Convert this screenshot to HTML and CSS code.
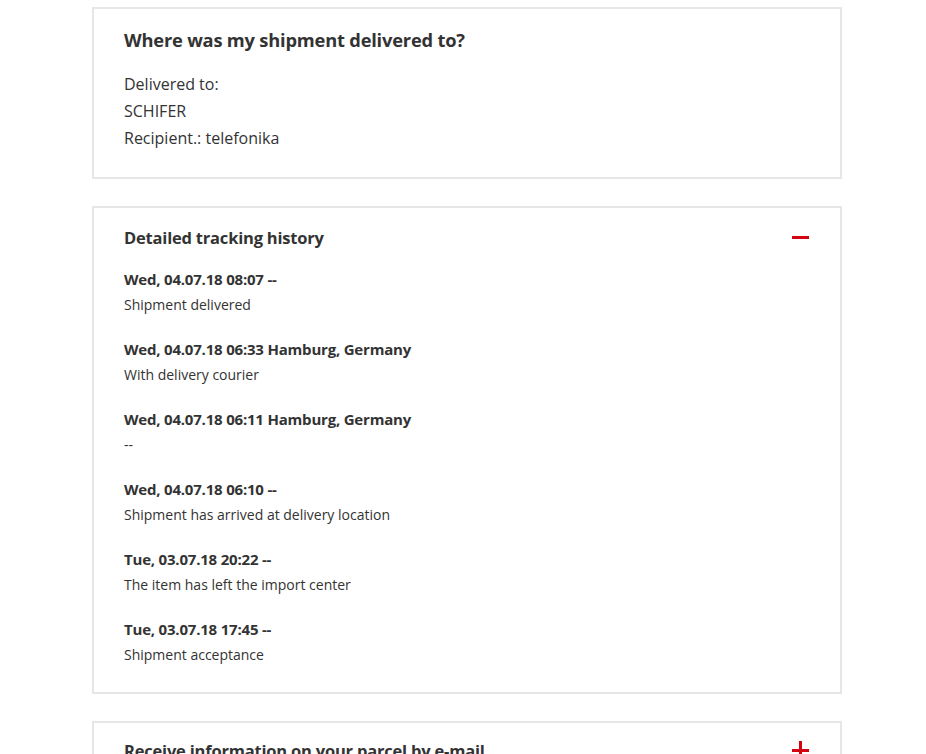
FILE: index.html
```html
<!DOCTYPE html>
<html>
<head>
<meta charset="utf-8">
<link rel="stylesheet" href="styles.css">
</head>
<body>
<main class="page">
  <section class="card card-delivery">
    <h2 class="card-title">Where was my shipment delivered to?</h2>
    <div class="address">
      <div>Delivered to:</div>
      <div>SCHIFER</div>
      <div>Recipient.: telefonika</div>
    </div>
  </section>

  <section class="card card-history">
    <div class="card-head">
      <h3 class="card-subtitle">Detailed tracking history</h3>
      <span class="toggle minus"></span>
    </div>
    <ul class="events">
      <li class="event"><div class="event-date">Wed, 04.07.18 08:07 --</div><div class="event-desc">Shipment delivered</div></li>
      <li class="event"><div class="event-date">Wed, 04.07.18 06:33 Hamburg, Germany</div><div class="event-desc">With delivery courier</div></li>
      <li class="event"><div class="event-date">Wed, 04.07.18 06:11 Hamburg, Germany</div><div class="event-desc">--</div></li>
      <li class="event"><div class="event-date">Wed, 04.07.18 06:10 --</div><div class="event-desc">Shipment has arrived at delivery location</div></li>
      <li class="event"><div class="event-date">Tue, 03.07.18 20:22 --</div><div class="event-desc">The item has left the import center</div></li>
      <li class="event"><div class="event-date">Tue, 03.07.18 17:45 --</div><div class="event-desc">Shipment acceptance</div></li>
    </ul>
  </section>

  <section class="card card-email">
    <div class="card-head">
      <h3 class="card-subtitle">Receive information on your parcel by e-mail</h3>
      <span class="toggle plus"></span>
    </div>
  </section>
</main>
</body>
</html>
```

FILE: styles.css
```css
html, body {
  margin: 0;
  padding: 0;
  background: #fff;
}
body {
  font-family: "Open Sans", "Noto Sans", sans-serif;
  color: #333;
  overflow: hidden;
  height: 754px;
}
.page {
  width: 750px;
  margin-left: 92px;
  padding-top: 7px;
  display: flex;
  flex-direction: column;
  gap: 27px;
}
.card {
  border: 2px solid #e6e6e6;
  padding: 0 31px 0 30px;
}
.card-delivery {
  padding-top: 19px;
  padding-bottom: 25px;
}
.card-title {
  margin: 0;
  font-size: 18.3px;
  line-height: 24px;
  font-weight: 700;
  letter-spacing: -0.2px;
}
.address {
  margin-top: 19px;
  font-size: 16px;
  line-height: 27px;
}
.card-history {
  padding-top: 18px;
  padding-bottom: 25px;
}
.card-email {
  padding-top: 16px;
  padding-bottom: 40px;
}
.card-head {
  display: flex;
  justify-content: space-between;
  align-items: center;
}
.card-subtitle {
  margin: 0;
  font-size: 16.5px;
  line-height: 24px;
  font-weight: 700;
  letter-spacing: -0.2px;
}
.toggle {
  position: relative;
  width: 17px;
  height: 18px;
  flex: none;
}
.toggle::before,
.toggle::after {
  content: "";
  position: absolute;
  background: #d40511;
}
.toggle::before {
  left: 0;
  top: 7px;
  width: 17px;
  height: 3px;
}
.plus::after {
  left: 7px;
  top: -1px;
  width: 3px;
  height: 19px;
}
.events {
  list-style: none;
  margin: 17px 0 0;
  padding: 0;
  display: flex;
  flex-direction: column;
  gap: 20px;
}
.event-date {
  font-size: 15px;
  font-weight: 700;
  line-height: 25px;
  letter-spacing: -0.2px;
}
.event-desc {
  font-size: 14px;
  line-height: 25px;
}
```
